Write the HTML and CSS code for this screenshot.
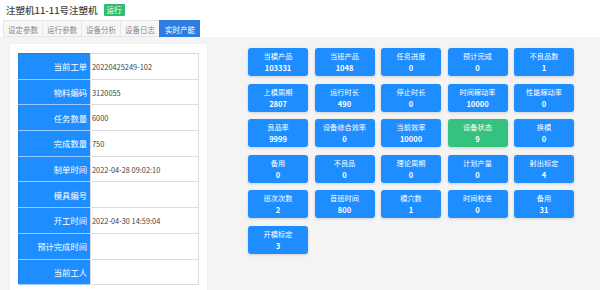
FILE: index.html
```html
<!DOCTYPE html>
<html lang="zh">
  <head>
    <meta charset="UTF-8" />
    <title>注塑机11-11号注塑机</title>
    <link rel="stylesheet" href="styles.css">
  </head>
  <body>
    <div class="header">
      <div class="title-row">
        <span class="title">注塑机11-11号注塑机</span>
        <span class="badge">运行</span>
      </div>
      <div class="tabs">
        <span class="tab">设定参数</span>
        <span class="tab">运行参数</span>
        <span class="tab">设备分析</span>
        <span class="tab">设备日志</span>
        <span class="tab active">实时产能</span>
      </div>
    </div>

    <div class="main">
      <div class="info-card">
        <table class="info-table">
          <tr><th>当前工单</th><td>20220425249-102</td></tr>
          <tr><th>物料编码</th><td>3120055</td></tr>
          <tr><th>任务数量</th><td>6000</td></tr>
          <tr><th>完成数量</th><td>750</td></tr>
          <tr><th>制单时间</th><td>2022-04-28 09:02:10</td></tr>
          <tr><th>模具编号</th><td></td></tr>
          <tr><th>开工时间</th><td>2022-04-30 14:59:04</td></tr>
          <tr><th>预计完成时间</th><td></td></tr>
          <tr><th>当前工人</th><td></td></tr>
        </table>
      </div>

      <div class="stat-grid">
        <div class="stat"><span class="stat-name">当模产品</span><b>103331</b></div>
        <div class="stat"><span class="stat-name">当班产品</span><b>1048</b></div>
        <div class="stat"><span class="stat-name">任务进度</span><b>0</b></div>
        <div class="stat"><span class="stat-name">预计完成</span><b>0</b></div>
        <div class="stat"><span class="stat-name">不良品数</span><b>1</b></div>

        <div class="stat"><span class="stat-name">上模周期</span><b>2807</b></div>
        <div class="stat"><span class="stat-name">运行时长</span><b>490</b></div>
        <div class="stat"><span class="stat-name">停止时长</span><b>0</b></div>
        <div class="stat"><span class="stat-name">时间稼动率</span><b>10000</b></div>
        <div class="stat"><span class="stat-name">性能稼动率</span><b>0</b></div>

        <div class="stat"><span class="stat-name">良品率</span><b>9999</b></div>
        <div class="stat"><span class="stat-name">设备综合效率</span><b>0</b></div>
        <div class="stat"><span class="stat-name">当前效率</span><b>10000</b></div>
        <div class="stat green"><span class="stat-name">设备状态</span><b>9</b></div>
        <div class="stat"><span class="stat-name">换模</span><b>0</b></div>

        <div class="stat"><span class="stat-name">备用</span><b>0</b></div>
        <div class="stat"><span class="stat-name">不良品</span><b>0</b></div>
        <div class="stat"><span class="stat-name">理论周期</span><b>0</b></div>
        <div class="stat"><span class="stat-name">计划产量</span><b>0</b></div>
        <div class="stat"><span class="stat-name">射出标定</span><b>4</b></div>

        <div class="stat"><span class="stat-name">班次次数</span><b>2</b></div>
        <div class="stat"><span class="stat-name">首班时间</span><b>800</b></div>
        <div class="stat"><span class="stat-name">模穴数</span><b>1</b></div>
        <div class="stat"><span class="stat-name">时间校准</span><b>0</b></div>
        <div class="stat"><span class="stat-name">备用</span><b>31</b></div>

        <div class="stat"><span class="stat-name">开模标定</span><b>3</b></div>
      </div>
    </div>
  </body>
</html>
```

FILE: styles.css
```css
body {
  margin: 0;
  background-color: #f4f4f4;
  font-family: "Noto Sans CJK SC", "Noto Sans", sans-serif;
  color: #333;
}

.header {
  background-color: #fff;
  height: 37px;
  padding-left: 3px;
}

.title-row {
  height: 20px;
  display: flex;
  align-items: center;
  gap: 6px;
  padding-left: 3px;
}

.title {
  font-size: 9.5px;
  font-weight: 500;
  color: #444;
}

.badge {
  background-color: #2fbf71;
  color: #fff;
  font-size: 7.5px;
  padding: 0 3px;
  height: 12px;
  line-height: 12px;
  border-radius: 1px;
}

.tabs {
  display: flex;
  height: 17px;
}

.tab {
  width: 39px;
  height: 17px;
  line-height: 17px;
  text-align: center;
  font-size: 7.5px;
  color: #888;
  background-color: #f7f7f7;
  border: 1px solid #e6e6e6;
  border-right: none;
  box-sizing: border-box;
}

.tab.active {
  width: 41px;
  background-color: #2f7de1;
  border-color: #2f7de1;
  color: #fff;
}

.main {
  display: flex;
  align-items: flex-start;
}

/* 左侧工单信息 */
.info-card {
  background-color: #fff;
  margin: 7px 0 0 10px;
  padding: 9px 8px 10px 8px;
  width: 181px;
  border-radius: 2px;
  box-shadow: 0 0 3px rgba(0, 0, 0, 0.05);
}

.info-table {
  width: 181px;
  border-collapse: collapse;
  table-layout: fixed;
}

.info-table th,
.info-table td {
  height: 25.7px;
  padding: 0;
  box-sizing: border-box;
  border: 1px solid #dcdcdc;
}

.info-table th {
  width: 72px;
  background-color: #1e8dff;
  color: #fff;
  font-size: 8.3px;
  font-weight: normal;
  text-align: right;
  padding-right: 3px;
  border-color: #1a7fe6 #dcdcdc #e4eefc #1a7fe6;
  border-bottom: 1px solid rgba(255, 255, 255, 0.55);
}

.info-table td {
  font-size: 7.4px;
  color: #444;
  padding-left: 1px;
}

/* 右侧实时数据 */
.stat-grid {
  display: grid;
  grid-template-columns: repeat(5, 60px);
  grid-auto-rows: 28px;
  column-gap: 6.5px;
  row-gap: 7.6px;
  margin: 11px 0 0 41px;
}

.stat {
  background-color: #1e8dff;
  border-radius: 3px;
  box-shadow: 0 1px 3px rgba(0, 0, 0, 0.15);
  color: #fff;
  display: flex;
  flex-direction: column;
  align-items: center;
  justify-content: center;
  line-height: 11px;
}

.stat.green {
  background-color: #35c27f;
}

.stat-name {
  font-size: 7.2px;
}

.stat b {
  font-size: 7.5px;
  font-weight: bold;
}
```
